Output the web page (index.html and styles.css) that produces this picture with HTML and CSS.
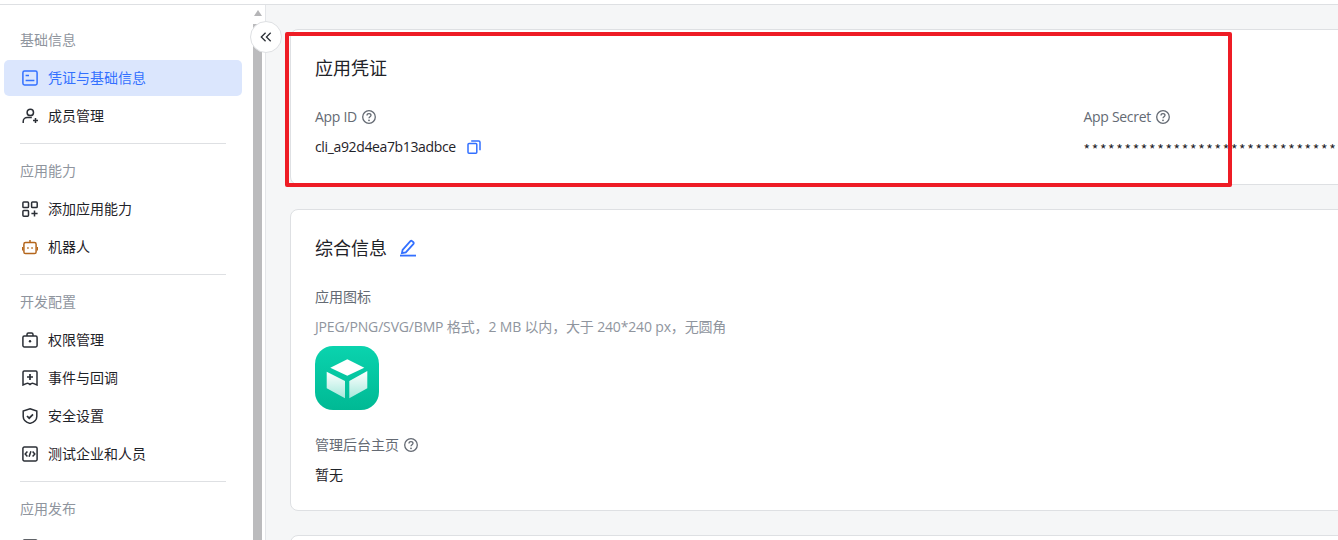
FILE: index.html
```html
<!DOCTYPE html>
<html lang="zh-CN">
<head>
<meta charset="utf-8">
<title>凭证与基础信息</title>
<link rel="stylesheet" href="styles.css">
</head>
<body>
<div class="app">
  <aside class="sidebar">
    <h3 class="group-title">基础信息</h3>
    <a class="item active">
      <svg class="ico" viewBox="0 0 16 16"><rect x="0.9" y="1.1" width="14.2" height="13.8" rx="1.6"/><path d="M3.6 5.4h3.4M3.6 10.4h8.8"/></svg>
      <span>凭证与基础信息</span>
    </a>
    <a class="item">
      <svg class="ico" viewBox="0 0 16 16"><circle cx="8.3" cy="4.4" r="3.2"/><path d="M1.2 15v-1.6c0-2.4 2-3.8 4-3.8h4.6"/><path d="M11 12.4h5M13.5 10v5"/></svg>
      <span>成员管理</span>
    </a>
    <hr class="divider">
    <h3 class="group-title">应用能力</h3>
    <a class="item">
      <svg class="ico" viewBox="0 0 16 16"><rect x="0.9" y="1" width="5.6" height="5.6" rx="0.9"/><rect x="9.6" y="1" width="5.6" height="5.6" rx="0.9"/><rect x="0.9" y="9.6" width="5.6" height="5.6" rx="0.9"/><path d="M9.4 12.4h6.2M12.5 9.4v6.2"/></svg>
      <span>添加应用能力</span>
    </a>
    <a class="item">
      <svg class="ico ico-orange" viewBox="0 0 16 16"><rect x="1.9" y="3.6" width="12.2" height="11" rx="1.6"/><path d="M8 .9v2.600M.4 8v3.400M15.600 8v3.400"/><path class="dot" d="M5.200 8.200h1.500v1.500H5.200zM9.300 8.200h1.500v1.500H9.300z"/></svg>
      <span>机器人</span>
    </a>
    <hr class="divider">
    <h3 class="group-title">开发配置</h3>
    <a class="item">
      <svg class="ico" viewBox="0 0 16 16"><rect x="0.9" y="4.1" width="14.2" height="10.8" rx="1.4"/><path d="M5 4V2.4c0-.8.6-1.4 1.4-1.4h3.2c.8 0 1.4.6 1.4 1.4V4"/><circle class="dot" cx="8" cy="9.2" r="1.2"/></svg>
      <span>权限管理</span>
    </a>
    <a class="item">
      <svg class="ico" viewBox="0 0 16 16"><path d="M2.2 1h11.6c.7 0 1.2.5 1.2 1.2V15l-3.2-1.4c-1-.4-1.8-.4-2.6 0L8 14.6l-1.2-1c-.8-.4-1.600-.4-2.600 0L1 15V2.200C1 1.500 1.500 1 2.200 1z"/><path class="thick" d="M5 7h6M8 4v6"/></svg>
      <span>事件与回调</span>
    </a>
    <a class="item">
      <svg class="ico" viewBox="0 0 16 16"><path d="M8 .8l6.800 2.200v5.400c0 3.200-3 5.800-6.800 7-3.800-1.200-6.800-3.800-6.800-7V3z"/><path class="thick" d="M5 8l2.200 2.200L11 6.400"/></svg>
      <span>安全设置</span>
    </a>
    <a class="item">
      <svg class="ico" viewBox="0 0 16 16"><rect x="0.9" y="1" width="14.2" height="14" rx="1.4"/><path d="M5.400 5.600L3.200 8l2.200 2.400M10.600 5.600L12.800 8l-2.200 2.400M8.900 5.200L7.100 10.800"/></svg>
      <span>测试企业和人员</span>
    </a>
    <hr class="divider">
    <h3 class="group-title">应用发布</h3>
    <a class="item">
      <svg class="ico" viewBox="0 0 16 16"><rect x="0.9" y="1" width="14.2" height="14" rx="1.4"/></svg>
    </a>
  </aside>
  <div class="scrollbar">
    <div class="scroll-rail">
      <i class="scroll-arrow"></i>
      <i class="scroll-thumb"></i>
    </div>
  </div>
  <main class="main">
    <section class="card card-cred">
      <h2 class="card-title">应用凭证</h2>
      <div class="cred-grid">
        <div>
          <div class="label label-latin">App ID
            <svg class="help" viewBox="0 0 14 14"><circle cx="7" cy="7" r="6.3"/><path d="M5 5.400C5 4.200 5.900 3.600 7 3.600s2 .7 2 1.700c0 1.500-2 1.500-2 3"/><circle class="help-dot" cx="7" cy="10.300" r=".9"/></svg>
          </div>
          <div class="value value-latin">cli_a92d4ea7b13adbce
            <svg class="copy" viewBox="0 0 14 14"><rect x="1" y="3.400" width="8.800" height="9.800" rx="1"/><path d="M4.200 1h7.600c.7 0 1.200.5 1.200 1.200v8"/></svg>
          </div>
        </div>
        <div>
          <div class="label label-latin">App Secret
            <svg class="help" viewBox="0 0 14 14"><circle cx="7" cy="7" r="6.3"/><path d="M5 5.400C5 4.200 5.900 3.600 7 3.600s2 .7 2 1.700c0 1.500-2 1.500-2 3"/><circle class="help-dot" cx="7" cy="10.300" r=".9"/></svg>
          </div>
          <div class="value secret">********************************</div>
        </div>
      </div>
    </section>
    <section class="card card-info">
      <h2 class="card-title">综合信息
        <svg class="edit" viewBox="0 0 18 18"><path d="M3.600 10.800L11.400 2.200c.5-.5 1.200-.5 1.700-.1l1.300 1.100c.5.500.5 1.200.1 1.700l-7.700 8.500-3.900.8z"/><path d="M1 16.600h16"/></svg>
      </h2>
      <div class="label">应用图标</div>
      <div class="hint">JPEG/PNG/SVG/BMP 格式，2 MB 以内，大于 240*240 px，无圆角</div>
      <svg class="logo" viewBox="0 0 64 64">
        <defs>
          <linearGradient id="bg" x1="0" y1="0" x2="0" y2="1"><stop offset="0" stop-color="#0ad3ae"/><stop offset="1" stop-color="#00b994"/></linearGradient>
          <linearGradient id="face" x1="0" y1="0" x2="0" y2="1"><stop offset="0" stop-color="#fff"/><stop offset="1" stop-color="#fff" stop-opacity=".65"/></linearGradient>
        </defs>
        <rect width="64" height="64" rx="18" fill="url(#bg)"/>
        <path d="M32.300 13.300L49.300 21.700 32.300 29.700 15.300 21.700z" fill="#fff"/>
        <path d="M11.700 25.700L30 35V52.300L11.700 42.300zM34.300 35L52.300 25V42.300L34.300 52.300z" fill="url(#face)"/>
      </svg>
      <div class="label label-home">管理后台主页
        <svg class="help" viewBox="0 0 14 14"><circle cx="7" cy="7" r="6.300"/><path d="M5 5.400C5 4.200 5.900 3.600 7 3.600s2 .7 2 1.700c0 1.500-2 1.500-2 3"/><circle class="help-dot" cx="7" cy="10.300" r=".9"/></svg>
      </div>
      <div class="value">暂无</div>
    </section>
    <section class="card card-next"></section>
  </main>
</div>
<button class="collapse" aria-label="收起">
  <svg viewBox="0 0 14 14"><path d="M6.500 2L1.500 7l5 5M12.500 2l-5 5 5 5"/></svg>
</button>
<div class="highlight"></div>
</body>
</html>
```
FILE: styles.css
```css
* { box-sizing: border-box; }
html, body { margin: 0; height: 100%; overflow: hidden; background: #fff; }
body {
  padding-top: 4px;
  font-family: "Open Sans", "Noto Sans CJK SC", sans-serif;
  font-size: 14px;
  line-height: 22px;
  color: #1f2329;
}
.app {
  display: flex;
  height: 536px;
  border-top: 1px solid #dee0e3;
  overflow: hidden;
}
.sidebar {
  width: 253px;
  flex: none;
  padding: 24px 11px 0 4px;
}
.group-title {
  margin: 0 0 9px;
  padding-left: 16px;
  font-size: 14px;
  font-weight: 400;
  line-height: 22px;
  color: #8f959e;
}
.item {
  display: flex;
  align-items: center;
  gap: 10px;
  height: 36px;
  margin-bottom: 2px;
  padding-left: 18px;
  border-radius: 5px;
  color: #1f2329;
}
.item.active { background: #dbe6fd; color: #3370ff; }
.ico {
  width: 16px;
  height: 16px;
  flex: none;
  fill: none;
  stroke: #2b2f36;
  stroke-width: 1.500;
}
.active .ico { stroke: #3370ff; }
.ico-orange { stroke: #b4661c; }
.ico .dot { fill: #2b2f36; stroke: none; }
.ico-orange .dot { fill: #b4661c; }
.ico .thick { stroke-width: 1.700; }
.divider {
  height: 1px;
  margin: 9px 16px 16px;
  border: 0;
  background: #dee0e3;
}
.scrollbar {
  width: 13px;
  flex: none;
  background: #fff;
  border-right: 1px solid #e4e6e9;
}
.scroll-rail {
  display: flex;
  flex-direction: column;
  align-items: center;
  width: 9px;
  height: 100%;
  padding-top: 5px;
}
.scroll-arrow {
  width: 0;
  height: 0;
  border-left: 4.500px solid transparent;
  border-right: 4.500px solid transparent;
  border-bottom: 6px solid #b5b5b7;
}
.scroll-thumb {
  flex: 1;
  width: 9px;
  margin-top: 8px;
  background: #bbbbbd;
}
.main {
  flex: 1;
  min-width: 0;
  padding: 24px 0 0 24px;
  background: #f5f6f7;
  overflow: hidden;
}
.card {
  width: 1160px;
  margin-bottom: 24px;
  padding: 0 24px;
  background: #fff;
  border: 1px solid #dee0e3;
  border-radius: 8px;
}
.card-cred { height: 156px; padding-top: 23px; }
.card-info { height: 302px; padding-top: 23px; }
.card-next { height: 100px; }
.card-title {
  display: flex;
  align-items: center;
  margin: 0;
  font-size: 18px;
  font-weight: 400;
  line-height: 30px;
  color: #1f2329;
}
.cred-grid {
  display: grid;
  grid-template-columns: 768.500px 1fr;
  margin-top: 23px;
}
.label {
  display: flex;
  align-items: center;
  gap: 5px;
  color: #646a73;
}
.label-latin { letter-spacing: -.3px; }
.value {
  display: flex;
  align-items: center;
  gap: 11px;
  margin-top: 8px;
  color: #1f2329;
}
.value-latin { letter-spacing: -.36px; }
.secret {
  margin-top: 10px;
  font-family: "Noto Sans CJK SC", sans-serif;
  letter-spacing: 1.650px;
  white-space: nowrap;
}
.help {
  width: 14px;
  height: 14px;
  flex: none;
  fill: none;
  stroke: #646a73;
  stroke-width: 1.300;
}
.help .help-dot { fill: #646a73; stroke: none; }
.copy {
  width: 14px;
  height: 14px;
  flex: none;
  fill: none;
  stroke: #3370ff;
  stroke-width: 1.500;
}
.edit {
  width: 18px;
  height: 18px;
  margin-left: 12px;
  fill: none;
  stroke: #3370ff;
  stroke-width: 1.800;
}
.card-info .label { margin-top: 23px; }
.hint { margin-top: 8px; color: #8f959e; letter-spacing: -.16px; }
.logo { display: block; width: 64px; height: 64px; margin-top: 8px; }
.card-info .label-home { margin-top: 24px; }
.collapse {
  position: absolute;
  left: 250px;
  top: 21px;
  width: 32px;
  height: 32px;
  padding: 9px;
  background: #fff;
  border: 1px solid #dee0e3;
  border-radius: 50%;
}
.collapse svg {
  display: block;
  width: 12px;
  height: 12px;
  fill: none;
  stroke: #2b2f36;
  stroke-width: 1.500;
}
.highlight {
  position: absolute;
  left: 285px;
  top: 32px;
  width: 947px;
  height: 155px;
  border: 4px solid #ee1c25;
  border-radius: 2px;
  pointer-events: none;
}
```
